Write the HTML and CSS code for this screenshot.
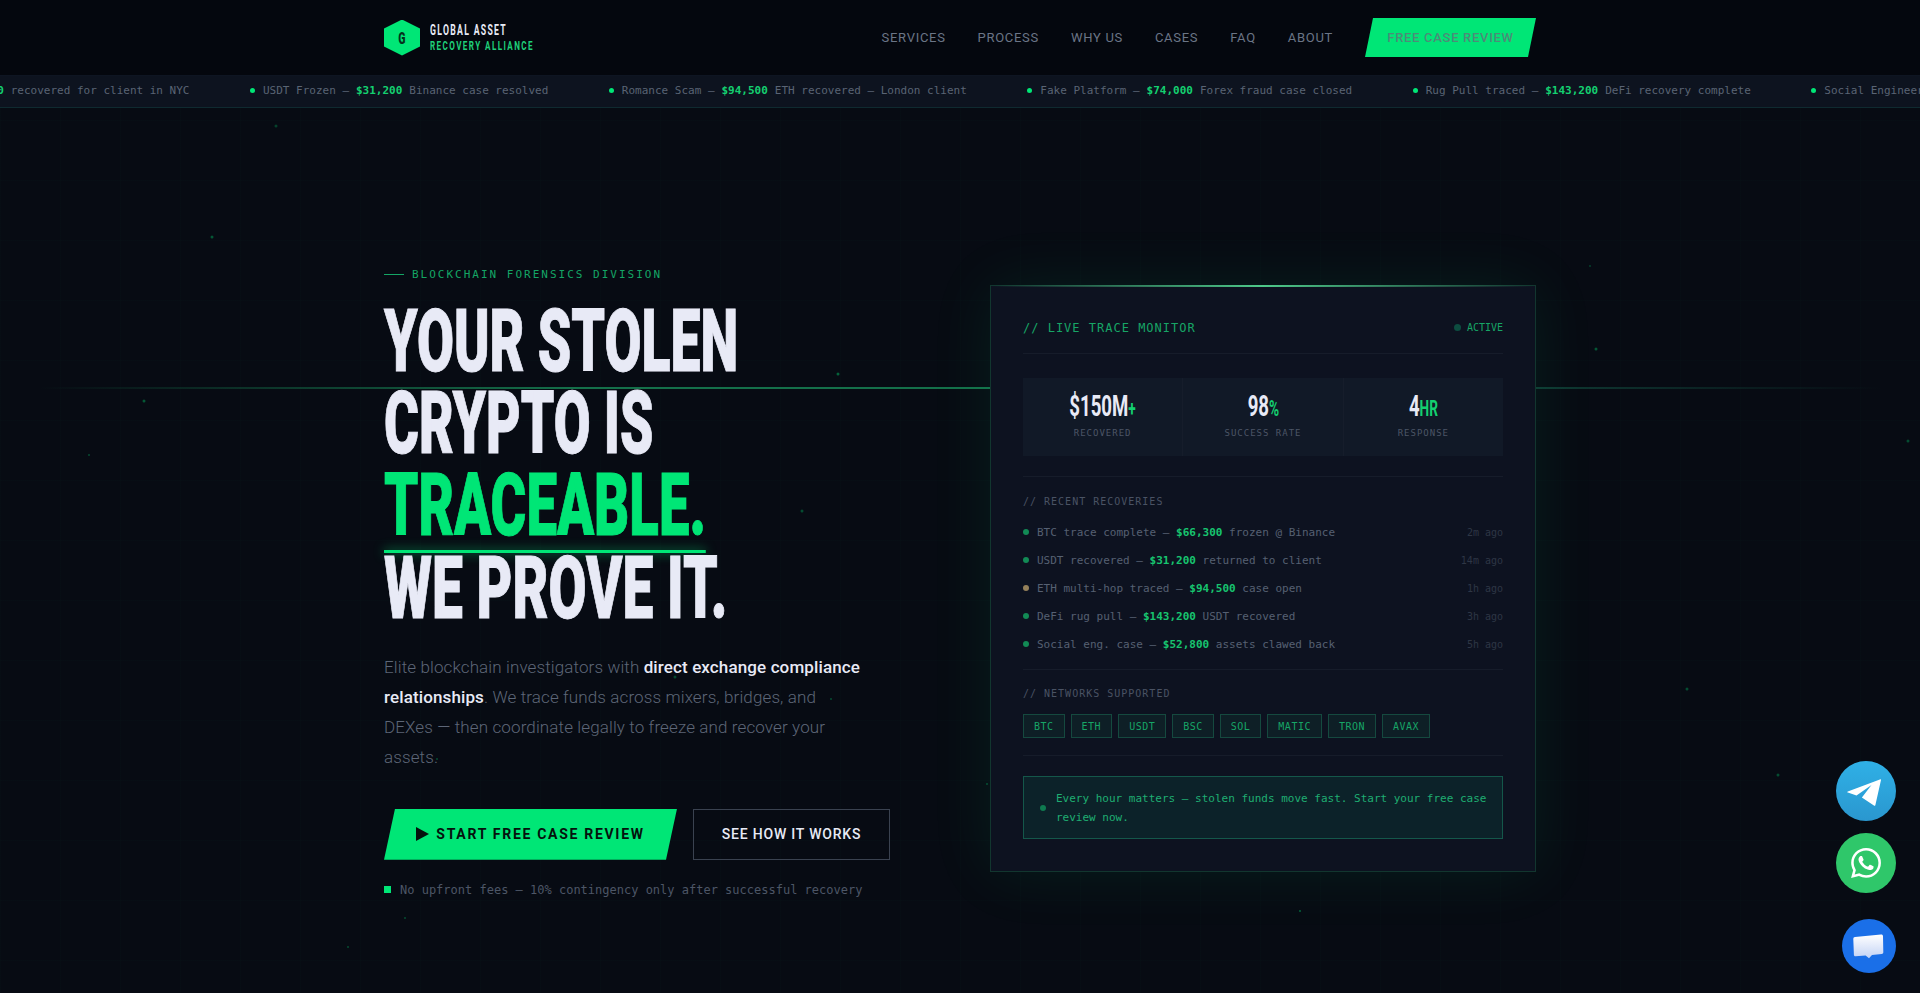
FILE: index.html
```html
<!DOCTYPE html>
<html lang="en">
<head>
    <meta charset="UTF-8">
    <meta name="viewport" content="width=device-width, initial-scale=1.0">
    <title>Global Asset Recovery Alliance</title>
    <link rel="stylesheet" href="styles.css">
</head>
<body>
    <svg class="particles" width="1920" height="993" viewBox="0 0 1920 993">
        <g fill="#00e676">
            <circle cx="212" cy="237" r="1.5" opacity=".35"/>
            <circle cx="144" cy="401" r="1.5" opacity=".35"/>
            <circle cx="89" cy="455" r="1" opacity=".3"/>
            <circle cx="276" cy="126" r="1.5" opacity=".25"/>
            <circle cx="838" cy="374" r="1.5" opacity=".4"/>
            <circle cx="802" cy="511" r="1.5" opacity=".3"/>
            <circle cx="1596" cy="349" r="1.5" opacity=".35"/>
            <circle cx="1590" cy="266" r="1" opacity=".25"/>
            <circle cx="1908" cy="441" r="1.5" opacity=".3"/>
            <circle cx="1687" cy="689" r="1.5" opacity=".3"/>
            <circle cx="1778" cy="775" r="1.5" opacity=".3"/>
            <circle cx="1300" cy="911" r="1" opacity=".4"/>
            <circle cx="348" cy="947" r="1" opacity=".3"/>
            <circle cx="405" cy="918" r="1" opacity=".3"/>
            <circle cx="675" cy="677" r="1.5" opacity=".3"/>
            <circle cx="831" cy="699" r="1" opacity=".3"/>
            <circle cx="437" cy="759" r="1" opacity=".3"/>
            <circle cx="987" cy="784" r="1" opacity=".3"/>
        </g>
    </svg>
    <div class="scan-line"></div>

    <nav class="nav">
        <div class="wrap nav-inner">
            <a class="logo" href="#">
                <span class="logo-hex"><span class="cond">G</span></span>
                <span class="logo-text">
                    <span class="cond logo-top">GLOBAL ASSET</span>
                    <span class="cond logo-bottom">RECOVERY ALLIANCE</span>
                </span>
            </a>
            <div class="nav-links">
                <a href="#">SERVICES</a>
                <a href="#">PROCESS</a>
                <a href="#">WHY US</a>
                <a href="#">CASES</a>
                <a href="#">FAQ</a>
                <a href="#">ABOUT</a>
                <a href="#" class="nav-cta">FREE CASE REVIEW</a>
            </div>
        </div>
    </nav>

    <div class="ticker">
        <div class="ticker-track">
            <div class="tick"><i></i>BTC Traced — <b>$66,300</b> recovered for client in NYC</div>
            <div class="tick"><i></i>USDT Frozen — <b>$31,200</b> Binance case resolved</div>
            <div class="tick"><i></i>Romance Scam — <b>$94,500</b> ETH recovered — London client</div>
            <div class="tick"><i></i>Fake Platform — <b>$74,000</b> Forex fraud case closed</div>
            <div class="tick"><i></i>Rug Pull traced — <b>$143,200</b> DeFi recovery complete</div>
            <div class="tick"><i></i>Social Engineering — <b>$52,800</b> assets clawed back</div>
        </div>
    </div>

    <main class="wrap hero">
        <section class="hero-left">
            <div class="eyebrow">BLOCKCHAIN FORENSICS DIVISION</div>
            <h1 class="headline">
                <span class="line"><span class="cond l1">YOUR STOLEN</span></span>
                <span class="line"><span class="cond l2">CRYPTO IS</span></span>
                <span class="line"><span class="cond l3 green under">TRACEABLE.</span></span>
                <span class="line"><span class="cond l4">WE PROVE IT.</span></span>
            </h1>
            <p class="lead">Elite blockchain investigators with <strong>direct exchange compliance relationships</strong>. We trace funds across mixers, bridges, and DEXes — then coordinate legally to freeze and recover your assets.</p>
            <div class="hero-btns">
                <a href="#" class="btn-primary"><span class="play"></span>START FREE CASE REVIEW</a>
                <a href="#" class="btn-ghost">SEE HOW IT WORKS</a>
            </div>
            <div class="note"><i></i>No upfront fees — 10% contingency only after successful recovery</div>
        </section>

        <section class="card">
            <div class="card-head">
                <span class="card-title">// LIVE TRACE MONITOR</span>
                <span class="active"><i></i>ACTIVE</span>
            </div>
            <div class="stats">
                <div class="stat">
                    <div class="cond stat-val">$150M<em>+</em></div>
                    <div class="stat-label">RECOVERED</div>
                </div>
                <div class="stat">
                    <div class="cond stat-val">98<em>%</em></div>
                    <div class="stat-label">SUCCESS RATE</div>
                </div>
                <div class="stat">
                    <div class="cond stat-val">4<em>HR</em></div>
                    <div class="stat-label">RESPONSE</div>
                </div>
            </div>
            <div class="block recent">
                <div class="block-title">// RECENT RECOVERIES</div>
                <div class="row"><i></i><span>BTC trace complete — <b>$66,300</b> frozen @ Binance</span><time>2m ago</time></div>
                <div class="row"><i></i><span>USDT recovered — <b>$31,200</b> returned to client</span><time>14m ago</time></div>
                <div class="row"><i class="amber"></i><span>ETH multi-hop traced — <b>$94,500</b> case open</span><time>1h ago</time></div>
                <div class="row"><i></i><span>DeFi rug pull — <b>$143,200</b> USDT recovered</span><time>3h ago</time></div>
                <div class="row"><i></i><span>Social eng. case — <b>$52,800</b> assets clawed back</span><time>5h ago</time></div>
            </div>
            <div class="block networks">
                <div class="block-title">// NETWORKS SUPPORTED</div>
                <div class="chips">
                    <span>BTC</span><span>ETH</span><span>USDT</span><span>BSC</span><span>SOL</span><span>MATIC</span><span>TRON</span><span>AVAX</span>
                </div>
            </div>
            <div class="urgent"><i></i><span>Every hour matters — stolen funds move fast. Start your free case review now.</span></div>
        </section>
    </main>

    <div class="float-btns">
        <a href="#" class="fab fab-tg">
            <svg width="60" height="60" viewBox="0 0 60 60"><path fill="#fff" d="M44.5 18.2 11.8 30.4c-.7.3-.6 1 .1 1.2l8.6 3 15-10.6-9.6 12.6 12 8c.7.4 1.3.1 1.5-.7l5.6-24.8c.1-.7-.2-1.1-.5-.9z"/></svg>
        </a>
        <a href="#" class="fab fab-wa">
            <svg width="30" height="30" viewBox="0 0 24 24"><path fill="#fff" d="M17.472 14.382c-.297-.149-1.758-.867-2.03-.967-.273-.099-.471-.148-.67.15-.197.297-.767.966-.94 1.164-.173.199-.347.223-.644.075-.297-.15-1.255-.463-2.39-1.475-.883-.788-1.48-1.761-1.653-2.059-.173-.297-.018-.458.13-.606.134-.133.298-.347.446-.52.149-.174.198-.298.298-.497.099-.198.05-.371-.025-.52-.075-.149-.669-1.612-.916-2.207-.242-.579-.487-.5-.669-.51-.173-.008-.371-.01-.57-.01-.198 0-.52.074-.792.372-.272.297-1.04 1.016-1.04 2.479 0 1.462 1.065 2.875 1.213 3.074.149.198 2.096 3.2 5.077 4.487.709.306 1.262.489 1.694.625.712.227 1.36.195 1.871.118.571-.085 1.758-.719 2.006-1.413.248-.694.248-1.289.173-1.413-.074-.124-.272-.198-.57-.347m-5.421 7.403h-.004a9.87 9.87 0 01-5.031-1.378l-.361-.214-3.741.982.998-3.648-.235-.374a9.86 9.86 0 01-1.51-5.26c.001-5.45 4.436-9.884 9.888-9.884 2.64 0 5.122 1.03 6.988 2.898a9.825 9.825 0 012.893 6.994c-.003 5.45-4.437 9.884-9.885 9.884m8.413-18.297A11.815 11.815 0 0012.05 0C5.495 0 .16 5.335.157 11.892c0 2.096.547 4.142 1.588 5.945L.057 24l6.305-1.654a11.882 11.882 0 005.683 1.448h.005c6.554 0 11.89-5.335 11.893-11.893a11.821 11.821 0 00-3.48-8.413z"/></svg>
        </a>
        <a href="#" class="fab fab-chat">
            <svg width="54" height="54" viewBox="0 0 54 54">
                <defs>
                    <linearGradient id="chatfill" x1="0" y1="0" x2="0" y2="1">
                        <stop offset="0" stop-color="#ffffff"/>
                        <stop offset="1" stop-color="#c3d3f5"/>
                    </linearGradient>
                </defs>
                <path fill="url(#chatfill)" d="M13 18 39 15.5c1.2-.1 2 .6 2 1.8l.3 16c0 1-.6 1.7-1.6 1.8l-9.7.9-3 3.2-3.4-2.7-10 .7c-1 .1-1.7-.5-1.7-1.5L11.3 20c0-1.1.6-1.9 1.7-2z"/>
            </svg>
        </a>
    </div>
</body>
</html>
```

FILE: styles.css
```css
* {
    box-sizing: border-box;
    margin: 0;
    padding: 0;
}
html, body {
    height: 100%;
    overflow: hidden;
}
body {
    position: relative;
    font-family: "Roboto", "Liberation Sans", sans-serif;
    background: #070b13;
    background-image:
        linear-gradient(rgba(0,230,118,0.012) 1px, transparent 1px),
        linear-gradient(90deg, rgba(0,230,118,0.012) 1px, transparent 1px);
    background-size: 60px 60px;
    color: #e8eaf6;
}
a {
    text-decoration: none;
    color: inherit;
}
i {
    display: block;
    flex: none;
}
.particles {
    position: absolute;
    top: 0;
    left: 0;
}
.scan-line {
    position: absolute;
    top: 387px;
    left: 0;
    width: 100%;
    height: 2px;
    background: linear-gradient(90deg, transparent 2%, #14704a 30%, #14704a 62%, #0f3a33 80%, transparent 98%);
}
.wrap {
    width: 1152px;
    margin: 0 auto;
}

/* condensed display type, no narrow family is installed */
.cond {
    display: inline-block;
    font-family: "Roboto", "Liberation Sans", sans-serif;
    font-weight: 900;
    transform: scaleX(0.62);
    transform-origin: left center;
    white-space: nowrap;
}

/* nav */
.nav {
    position: relative;
    height: 75px;
    background: #04070e;
}
.nav-inner {
    height: 75px;
    display: flex;
    align-items: center;
    justify-content: space-between;
}
.logo {
    display: flex;
    align-items: center;
    gap: 10px;
}
.logo-hex {
    width: 36px;
    height: 36px;
    display: flex;
    align-items: center;
    justify-content: center;
    background: #00e676;
    clip-path: polygon(50% 0, 100% 25%, 100% 75%, 50% 100%, 0 75%, 0 25%);
    color: #05311c;
    font-size: 17px;
}
.logo-hex .cond {
    transform-origin: center;
}
.logo-text {
    display: flex;
    flex-direction: column;
    gap: 2px;
}
.logo-top {
    font-size: 14px;
    line-height: 14px;
    font-weight: 700;
    letter-spacing: 2.1px;
    color: #e8eaf6;
}
.logo-bottom {
    font-size: 13px;
    line-height: 13px;
    font-weight: 700;
    letter-spacing: 2.3px;
    color: #1fd07a;
}
.nav-links {
    display: flex;
    align-items: center;
    gap: 32px;
    font-size: 13px;
    letter-spacing: 0.7px;
    color: #6b7586;
}
.nav-cta {
    width: 171px;
    height: 39px;
    display: flex;
    align-items: center;
    justify-content: center;
    background: #00e676;
    clip-path: polygon(8px 0, 100% 0, calc(100% - 8px) 100%, 0 100%);
    color: #4d8c78;
    font-weight: 500;
}

/* ticker */
.ticker {
    position: relative;
    height: 33px;
    background: #0d131f;
    border-top: 1px solid #0e1522;
    border-bottom: 1px solid #0f2a30;
    overflow: hidden;
}
.ticker-track {
    display: flex;
    gap: 60.5px;
    height: 100%;
    padding-bottom: 2px;
    width: max-content;
    transform: translateX(-142px);
}
.tick {
    display: flex;
    align-items: center;
    white-space: pre;
    font-family: "DejaVu Sans Mono", monospace;
    font-size: 11px;
    color: #5a6474;
}
.tick i {
    width: 5px;
    height: 5px;
    margin-right: 8px;
    border-radius: 50%;
    background: #00e676;
}
.tick b {
    color: #14d070;
    margin: 0 0.3px;
}

/* hero */
.hero {
    position: relative;
    display: grid;
    grid-template-columns: 546px 546px;
    gap: 60px;
    padding-top: 177px;
}
.hero-left {
    margin-top: -18px;
}
.eyebrow {
    display: flex;
    align-items: center;
    gap: 8px;
    height: 14px;
    font-family: "DejaVu Sans Mono", monospace;
    font-size: 11px;
    letter-spacing: 2px;
    color: #14a565;
}
.eyebrow::before {
    content: "";
    width: 20px;
    height: 1px;
    background: #14a565;
}
.headline {
    margin-top: 19px;
    font-size: 88px;
    line-height: 82px;
    font-weight: 900;
}
.line {
    display: block;
    height: 82.2px;
}
.headline .cond {
    -webkit-text-stroke: 1px currentColor;
}
.headline .l1 {
    transform: scaleX(0.609);
}
.headline .l2 {
    transform: scaleX(0.606);
}
.headline .l3 {
    transform: scaleX(0.62);
}
.headline .l4 {
    transform: scaleX(0.627);
}
.green {
    color: #00e676;
}
.under {
    position: relative;
}
.under::after {
    content: "";
    position: absolute;
    left: 0;
    right: 0;
    bottom: -7px;
    height: 3px;
    background: #00e676;
    box-shadow: 0 0 14px rgba(0,230,118,.75);
}
.lead {
    margin-top: 23px;
    width: 478px;
    font-size: 17px;
    line-height: 30px;
    font-weight: 300;
    letter-spacing: 0.12px;
    color: #5d6677;
}
.lead strong {
    font-weight: 500;
    color: #e8eaf6;
}
.hero-btns {
    display: flex;
    gap: 16px;
    margin-top: 37px;
}
.btn-primary {
    width: 293px;
    height: 51px;
    display: flex;
    align-items: center;
    justify-content: center;
    gap: 7px;
    background: #00e676;
    clip-path: polygon(11px 0, 100% 0, calc(100% - 11px) 100%, 0 100%);
    color: #05120d;
    font-size: 14px;
    font-weight: 700;
    letter-spacing: 1.7px;
}
.play {
    width: 0;
    height: 0;
    border-left: 13px solid #05120d;
    border-top: 7.5px solid transparent;
    border-bottom: 7.5px solid transparent;
}
.btn-ghost {
    width: 197px;
    height: 51px;
    display: flex;
    align-items: center;
    justify-content: center;
    border: 1px solid #3a4250;
    color: #e8eaf6;
    font-size: 14px;
    font-weight: 500;
    letter-spacing: 0.8px;
}
.note {
    display: flex;
    align-items: center;
    gap: 9px;
    margin-top: 23px;
    font-family: "DejaVu Sans Mono", monospace;
    font-size: 12px;
    color: #4d5666;
}
.note i {
    width: 7px;
    height: 7px;
    background: #00e676;
}

/* card */
.card {
    position: relative;
    height: 587px;
    padding: 32px;
    background: #0d1220;
    border: 1px solid #12362f;
    box-shadow: 0 0 60px rgba(0,230,118,0.09);
}
.card::before {
    content: "";
    position: absolute;
    top: -1px;
    left: 0;
    right: 0;
    height: 2px;
    background: linear-gradient(90deg, transparent, #4ec98a 50%, transparent);
}
.card-head {
    display: flex;
    justify-content: space-between;
    align-items: center;
    height: 36px;
    padding-bottom: 16px;
    border-bottom: 1px solid #161c2a;
    font-family: "DejaVu Sans Mono", monospace;
}
.card-title {
    font-size: 12px;
    letter-spacing: 1px;
    color: #17a566;
}
.active {
    display: flex;
    align-items: center;
    gap: 6px;
    font-size: 10px;
    color: #17a566;
}
.active i {
    width: 7px;
    height: 7px;
    border-radius: 50%;
    background: #0d4d40;
}
.stats {
    display: grid;
    grid-template-columns: repeat(3, 1fr);
    gap: 1px;
    height: 78px;
    margin-top: 24px;
    background: #161d2b;
}
.stat {
    padding-top: 13px;
    text-align: center;
    background: #111927;
}
.stat-val {
    font-size: 30px;
    line-height: 30px;
    font-weight: 700;
    transform: scaleX(0.62);
    transform-origin: center;
    color: #e8eaf6;
}
.stat-val em {
    font-style: normal;
    font-size: 22px;
    color: #14d070;
}
.stat-label {
    margin-top: 4px;
    font-family: "DejaVu Sans Mono", monospace;
    font-size: 9px;
    letter-spacing: 1px;
    color: #4c5566;
}
.block {
    font-family: "DejaVu Sans Mono", monospace;
    border-top: 1px solid #161c2a;
}
.recent {
    margin-top: 20px;
    padding-top: 19px;
}
.block-title {
    font-size: 10px;
    line-height: 12px;
    letter-spacing: 1px;
    color: #4a5364;
}
.row {
    display: flex;
    align-items: center;
    height: 28px;
    font-size: 11px;
    white-space: pre;
    color: #566072;
}
.recent .block-title {
    margin-bottom: 10px;
}
.row i {
    width: 6px;
    height: 6px;
    margin-right: 8px;
    border-radius: 50%;
    background: #128a55;
}
.row i.amber {
    background: #94805a;
}
.row b {
    color: #17c46f;
}
.row time {
    margin-left: auto;
    font-size: 10px;
    color: #2e3645;
}
.networks {
    margin-top: 11px;
    padding-top: 18px;
}
.chips {
    display: flex;
    gap: 6px;
    margin-top: 14px;
    padding-bottom: 17px;
    border-bottom: 1px solid #161c2a;
}
.chips span {
    height: 24px;
    padding: 0 10px;
    display: flex;
    align-items: center;
    font-size: 10px;
    letter-spacing: 0.5px;
    color: #17a566;
    background: #0e1f26;
    border: 1px solid #15493f;
}
.urgent {
    display: flex;
    align-items: center;
    gap: 10px;
    height: 63px;
    margin-top: 20px;
    padding: 0 12px 0 16px;
    background: #0c2229;
    border: 1px solid #14574a;
    font-family: "DejaVu Sans Mono", monospace;
    font-size: 11px;
    line-height: 19px;
    color: #1fae72;
}
.urgent i {
    width: 6px;
    height: 6px;
    border-radius: 50%;
    background: #0f7a50;
}

/* floating buttons */
.float-btns {
    position: fixed;
    right: 24px;
    top: 761px;
    display: flex;
    flex-direction: column;
    align-items: flex-end;
    gap: 12px;
}
.fab {
    width: 60px;
    height: 60px;
    display: flex;
    align-items: center;
    justify-content: center;
    border-radius: 50%;
}
.fab-tg {
    background: linear-gradient(180deg, #2fb0e6, #2a97cf);
}
.fab-wa {
    background: #2fc76a;
}
.fab-chat {
    width: 54px;
    height: 54px;
    margin-top: 14px;
    background: #1a6fe8;
}
```
